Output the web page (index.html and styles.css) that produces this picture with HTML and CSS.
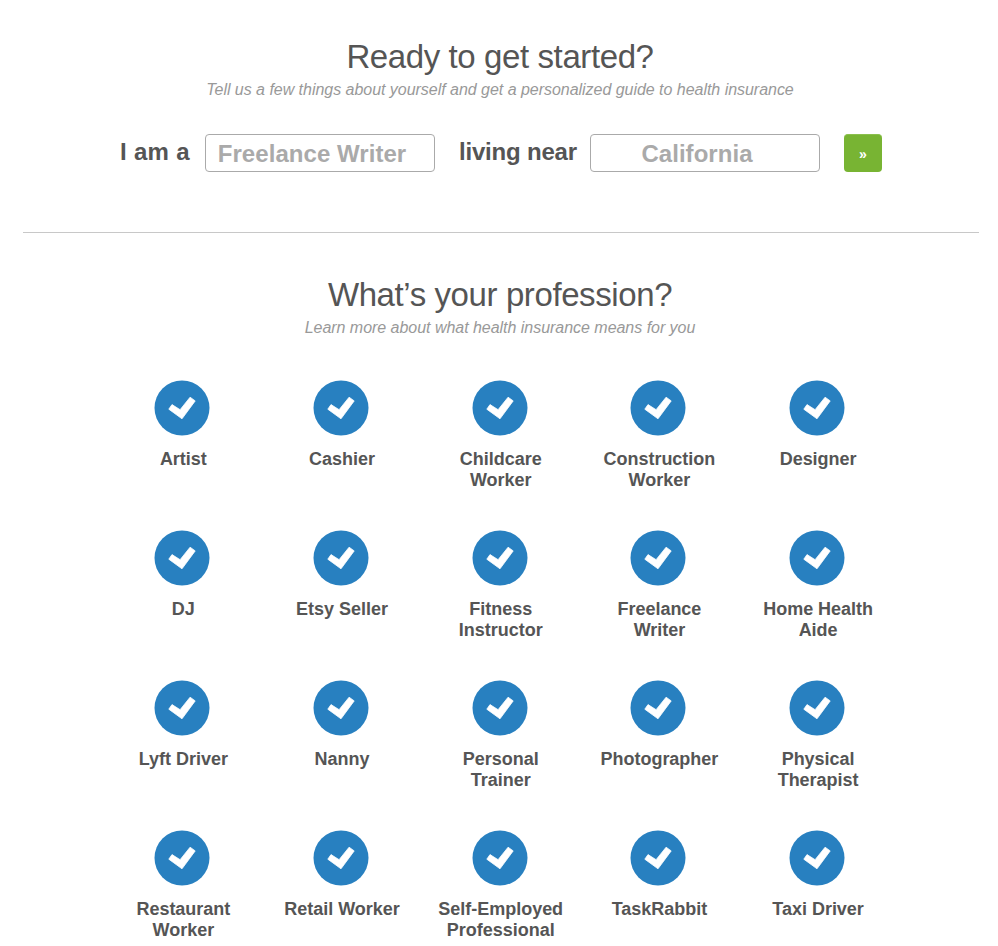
FILE: index.html
```html
<!DOCTYPE html>
<html lang="en">
<head>
  <meta charset="UTF-8">
  <title>Health Insurance Guide</title>
  <link rel="stylesheet" href="styles.css">
</head>
<body>
  <!-- shared check icon -->
  <svg class="sprite" width="0" height="0">
    <symbol id="check" viewBox="0 0 56 56">
      <circle cx="28" cy="28" r="27.5" fill="#2880c0"/>
      <path d="M14.8 29.2 L18 24.6 L26.1 29.7 L36.1 17.2 L41.2 20.9 L28 38.8 Z" fill="#fff" stroke="#fff" stroke-width="0.8" stroke-linejoin="round"/>
    </symbol>
  </svg>

  <div class="container">
    <section class="get-started">
      <h2>Ready to get started?</h2>
      <p class="subtitle">Tell us a few things about yourself and get a personalized guide to health insurance</p>

      <form class="guide-form">
        <label class="label-job" for="job">I am a</label>
        <input id="job" class="field" type="text" placeholder="Freelance Writer">
        <label class="label-place" for="place">living near</label>
        <input id="place" class="field" type="text" placeholder="California">
        <button class="go-btn" type="button">»</button>
      </form>
    </section>

    <section class="professions">
      <h2>What’s your profession?</h2>
      <p class="subtitle">Learn more about what health insurance means for you</p>

      <ul class="profession-list">
        <li><svg class="icon"><use href="#check"/></svg><span>Artist</span></li>
        <li><svg class="icon"><use href="#check"/></svg><span>Cashier</span></li>
        <li><svg class="icon"><use href="#check"/></svg><span>Childcare<br>Worker</span></li>
        <li><svg class="icon"><use href="#check"/></svg><span>Construction<br>Worker</span></li>
        <li><svg class="icon"><use href="#check"/></svg><span>Designer</span></li>
        <li><svg class="icon"><use href="#check"/></svg><span>DJ</span></li>
        <li><svg class="icon"><use href="#check"/></svg><span>Etsy Seller</span></li>
        <li><svg class="icon"><use href="#check"/></svg><span>Fitness<br>Instructor</span></li>
        <li><svg class="icon"><use href="#check"/></svg><span>Freelance<br>Writer</span></li>
        <li><svg class="icon"><use href="#check"/></svg><span>Home Health<br>Aide</span></li>
        <li><svg class="icon"><use href="#check"/></svg><span>Lyft Driver</span></li>
        <li><svg class="icon"><use href="#check"/></svg><span>Nanny</span></li>
        <li><svg class="icon"><use href="#check"/></svg><span>Personal<br>Trainer</span></li>
        <li><svg class="icon"><use href="#check"/></svg><span>Photographer</span></li>
        <li><svg class="icon"><use href="#check"/></svg><span>Physical<br>Therapist</span></li>
        <li><svg class="icon"><use href="#check"/></svg><span>Restaurant<br>Worker</span></li>
        <li><svg class="icon"><use href="#check"/></svg><span>Retail Worker</span></li>
        <li><svg class="icon"><use href="#check"/></svg><span>Self-Employed<br>Professional</span></li>
        <li><svg class="icon"><use href="#check"/></svg><span>TaskRabbit</span></li>
        <li><svg class="icon"><use href="#check"/></svg><span>Taxi Driver</span></li>
      </ul>
    </section>
  </div>
</body>
</html>
```
FILE: styles.css
```css
* {
  box-sizing: border-box;
}

body {
  margin: 0;
  height: 946px;
  overflow: hidden;
  background: #fff;
  color: #555;
  font-family: "Helvetica Neue", "Liberation Sans", Arial, sans-serif;
}

.sprite {
  display: block;
}

.container {
  width: 956px;
  margin-left: 23px;
}

.get-started {
  height: 233px;
  padding-top: 37px;
  border-bottom: 1px solid #c8c8c8;
}

.professions {
  padding-top: 42px;
}

h2 {
  margin: 0;
  padding-right: 2px;
  font-size: 33px;
  line-height: 40px;
  font-weight: 400;
  letter-spacing: -0.4px;
  text-align: center;
}

.subtitle {
  margin: 3px 0 0;
  padding-right: 2px;
  color: #999;
  font-size: 16px;
  line-height: 20px;
  font-style: italic;
  letter-spacing: -0.03px;
  text-align: center;
}

.guide-form {
  display: flex;
  margin: 34px 0 0 97px;
}

.guide-form label {
  font-size: 24px;
  line-height: 36px;
  font-weight: 700;
  white-space: nowrap;
}
.guide-form .label-job {
  width: 85px;
  letter-spacing: 0.3px;
}
.guide-form .label-place {
  width: 131px;
  margin-left: 24px;
  letter-spacing: -0.2px;
}

.field {
  width: 230px;
  height: 38px;
  padding: 2px 18px 0 2px;
  border: 1px solid #aaa;
  border-radius: 4px;
  background: #fff;
  color: #555;
  font-family: inherit;
  font-size: 24px;
  font-weight: 700;
  letter-spacing: 0.05px;
  text-align: center;
}
.field::placeholder {
  color: #aaa;
  opacity: 1;
}

.go-btn {
  width: 38px;
  height: 38px;
  margin-left: 24px;
  padding: 0;
  border: none;
  border-top: 1px solid #8bc04d;
  border-radius: 4px;
  background: #78b433;
  color: #fff;
  font-family: inherit;
  font-size: 14px;
  font-weight: 700;
}

.profession-list {
  display: grid;
  grid-template-columns: repeat(5, 158.7px);
  grid-auto-rows: 150px;
  margin: 42px 0 0 80px;
  padding: 0;
  list-style: none;
}

.profession-list li {
  display: flex;
  flex-direction: column;
  align-items: center;
  font-size: 18px;
  line-height: 21px;
  font-weight: 700;
  letter-spacing: -0.02px;
  text-align: center;
}

.profession-list span {
  padding-left: 2px;
}

.icon {
  width: 56px;
  height: 56px;
  margin-bottom: 13px;
}
```
